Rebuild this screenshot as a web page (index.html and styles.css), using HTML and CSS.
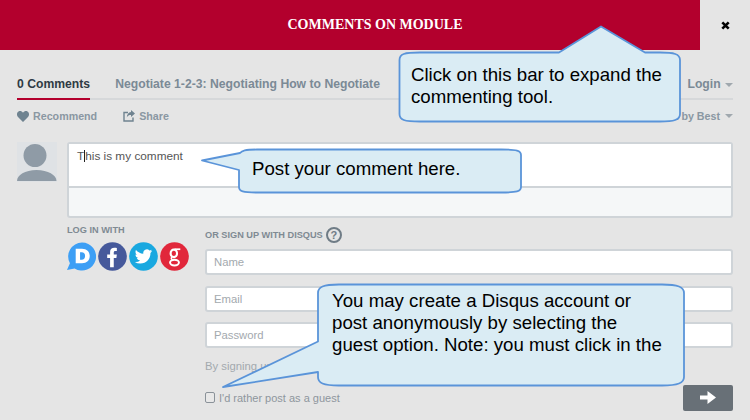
FILE: index.html
```html
<!DOCTYPE html>
<html lang="en">
<head>
<meta charset="utf-8">
<title>Comments on module</title>
<link rel="stylesheet" href="styles.css">
</head>
<body>
<div class="page">
  <header class="topbar">
    <div class="bar">COMMENTS ON MODULE</div>
    <div class="close">
      <svg width="9" height="9" viewBox="0 0 9 9"><path d="M1.300 1.300l6.400 6.400M7.700 1.300l-6.400 6.400" stroke="#000" stroke-width="2.600"/></svg>
    </div>
  </header>

  <main class="thread">
    <nav class="tabs">
      <span class="tab active">0 Comments</span>
      <span class="tab">Negotiate 1-2-3: Negotiating How to Negotiate</span>
      <span class="tab login">Login <i class="caret"></i></span>
    </nav>

    <div class="actions">
      <span class="action">
        <svg width="12" height="11" viewBox="0 0 12 11"><path d="M6 11L1 6C-.6 4.200-.2 1.500 1.500.5 3 -.3 5 .2 6 1.800 7 .2 9-.3 10.500.5 12.200 1.500 12.600 4.200 11 6z" fill="#6f8390"/></svg>
        Recommend
      </span>
      <span class="action share">
        <svg width="12" height="12" viewBox="0 0 12 12"><path d="M5 2.500H1v8.500h9V7.500" fill="none" stroke="#6f8390" stroke-width="1.400"/><path d="M8 0l4 3.500L8 7V5C6 5 4.800 5.600 3.800 7.500 3.800 4.500 5.500 2.300 8 2z" fill="#6f8390"/></svg>
        Share
      </span>
      <span class="action sort">Sort by Best <i class="caret"></i></span>
    </div>

    <section class="compose">
      <div class="avatar">
        <svg width="40" height="40" viewBox="0 0 40 40"><circle cx="18" cy="13.500" r="11.500" fill="#8f9ba6"/><path d="M0 39c0-6 8-11 19.500-11S39.500 33 39.500 39z" fill="#8f9ba6"/></svg>
      </div>
      <div class="box">
        <div class="textarea">T<span class="cursor"></span>his is my comment</div>
        <div class="toolbar"></div>
      </div>
    </section>

    <section class="auth">
      <div class="login-col">
        <div class="label">LOG IN WITH</div>
        <div class="socials">
          <svg class="social" width="29" height="29" viewBox="0 0 30 30"><path d="M15.500 .5a14.500 14.500 0 1 1-7.600 26.800L0 29l3-7A14.500 14.500 0 0 1 15.500 .5z" fill="#3d9ff5"/><path fill-rule="evenodd" d="M9 7h6.500c5 0 8 3 8 7.500s-3 7.500-8 7.500H9zm4.500 3.700v7.600h1.700c2.200 0 3.500-1.400 3.500-3.800s-1.300-3.800-3.500-3.800z" fill="#fff"/></svg>
          <svg class="social" width="29" height="29" viewBox="0 0 30 30"><circle cx="15" cy="15" r="14.800" fill="#46599b"/><path d="M12.500 26V16.500H9.500V13h3v-2.700C12.500 7.300 14.200 6 17 6c1 0 2 .1 2.500.2v3.200H18c-1.300 0-1.700.6-1.700 1.600V13h3.200l-.5 3.500h-2.700V26z" fill="#fff"/></svg>
          <svg class="social" width="29" height="29" viewBox="0 0 30 30"><circle cx="15" cy="15" r="14.800" fill="#19a8e0"/><g transform="translate(6 6) scale(.75)"><path d="M23.950 4.570a10 10 0 0 1-2.820.77 4.960 4.960 0 0 0 2.160-2.720c-.95.550-2 .96-3.130 1.190a4.920 4.920 0 0 0-8.380 4.480C7.690 8.100 4.070 6.130 1.640 3.160a4.820 4.820 0 0 0-.66 2.470c0 1.710.87 3.210 2.190 4.100a4.900 4.900 0 0 1-2.230-.61v.06a4.920 4.920 0 0 0 3.950 4.830 5 5 0 0 1-2.210.08 4.940 4.940 0 0 0 4.600 3.420A9.870 9.870 0 0 1 0 19.540a14 14 0 0 0 7.560 2.210c9.050 0 14-7.500 14-13.980 0-.21 0-.42-.02-.63a9.940 9.940 0 0 0 2.410-2.570z" fill="#fff"/></g></svg>
          <svg class="social" width="29" height="29" viewBox="0 0 30 30"><circle cx="15" cy="15" r="14.800" fill="#e1273b"/><g fill="none" stroke="#fff"><ellipse cx="14.300" cy="11.800" rx="3.300" ry="3.900" stroke-width="2.200"/><ellipse cx="15" cy="21.300" rx="4.600" ry="3" stroke-width="2"/><path d="M12.500 15.500c-1.500 1-1 2.300.5 2.800" stroke-width="1.500"/><path d="M15 7.500h6" stroke-width="1.800"/></g></svg>
        </div>
      </div>
      <div class="signup-col">
        <div class="label signup-label">OR SIGN UP WITH DISQUS <span class="help">?</span></div>
        <div class="field">Name</div>
        <div class="field">Email</div>
        <div class="field">Password</div>
        <p class="terms">By signing up, you agree to the Disqus Basic Rules</p>
        <div class="guest-row">
          <label class="guest"><span class="check"></span>I'd rather post as a guest</label>
          <span class="next">
            <svg width="16" height="13" viewBox="0 0 16 13"><path d="M0 4.500h7.500V0L16 6.500 7.500 13V8.500H0z" fill="#fff"/></svg>
          </span>
        </div>
      </div>
    </section>
  </main>

  <aside class="callout callout-bar">
    <svg class="shape" width="286" height="100" viewBox="0 0 286 100"><path d="M22 27.500H161L203 1.500 247 27.500H262C276 27.500 282 29 282 35V89C282 95 276 96.500 262 96.500H22C6 96.500 1.500 95 1.500 89V35C1.500 29 6 27.500 22 27.500z"/></svg>
    <p class="callout-text">Click on this bar to expand the commenting tool.</p>
  </aside>

  <aside class="callout callout-post">
    <svg class="shape" width="324" height="48" viewBox="0 0 324 48"><path d="M56 1.500H300C316 1.500 320 2.500 320 7V39C320 43.500 316 44.500 300 44.500H56C42 44.500 38 43.500 38 39V22L1 12.500 39 5C41 2.500 44 1.500 56 1.500z"/></svg>
    <p class="callout-text">Post your comment here.</p>
  </aside>

  <aside class="callout callout-guest">
    <svg class="shape" width="464" height="108" viewBox="0 0 464 108"><path d="M117 1.500H440C456 1.500 462 4 462 10V94C462 100 456 102.500 440 102.500H117C101 102.500 96 100 96 94V89L1 104 96 58.500V10C96 4 101 1.500 117 1.500z"/></svg>
    <p class="callout-text">You may create a Disqus account or post anonymously by selecting the guest option. Note: you must click in the</p>
  </aside>
</div>
</body>
</html>
```

FILE: styles.css
```css
* { box-sizing: border-box; }
html, body { margin: 0; padding: 0; }
body { font-family: "Liberation Sans", Arial, sans-serif; }

.page {
  position: relative;
  width: 750px;
  height: 420px;
  overflow: hidden;
  background: #e5e5e5;
}

.topbar { display: flex; height: 50px; }
.bar {
  width: 700px;
  display: flex;
  align-items: center;
  justify-content: center;
  padding-left: 50px;
  background: #b3002d;
  color: #fff;
  font-family: "Liberation Serif", serif;
  font-weight: 700;
  font-size: 14px;
}
.close { flex: 1; display: flex; align-items: center; justify-content: center; }

.thread { padding: 0 17px; }

.tabs {
  display: flex;
  gap: 25px;
  height: 50px;
  border-bottom: 2px solid #d6d8da;
}
.tab {
  height: 50px;
  padding-top: 26px;
  font-size: 12.200px;
  font-weight: 700;
  line-height: 16px;
  color: #7b8a96;
}
.tab.active { color: #2e3a44; border-bottom: 2px solid #b3002d; }
.tab.login { margin-left: auto; }

.caret {
  display: inline-block;
  width: 0;
  height: 0;
  margin-left: 1px;
  vertical-align: middle;
  border-left: 4px solid transparent;
  border-right: 4px solid transparent;
  border-top: 4px solid #a0a8ae;
}

.actions {
  display: flex;
  align-items: center;
  gap: 26px;
  height: 32px;
  margin-bottom: 10px;
  font-size: 10.700px;
  font-weight: 700;
  color: #8a97a2;
}
.action { display: flex; align-items: center; gap: 4px; }
.sort { margin-left: auto; }

.compose { display: flex; gap: 10px; }
.avatar { width: 40px; height: 40px; background: #dfe2e5; }
.box {
  flex: 1;
  height: 76px;
  border: 2px solid #cfd4d8;
  border-radius: 3px;
  background: #f5f7f8;
}
.textarea {
  height: 44px;
  padding: 5px 8px;
  background: #fff;
  border-bottom: 2px solid #cfd4d8;
  font-size: 11.800px;
  line-height: 14px;
  color: #555;
}
.cursor {
  display: inline-block;
  width: 0;
  height: 12px;
  vertical-align: -2px;
  border-left: 1px solid #222;
}

.auth { display: flex; margin-left: 50px; }
.login-col { width: 138px; padding-top: 6px; }
.signup-col { flex: 1; padding-top: 9px; }

.label {
  font-size: 9.200px;
  font-weight: 700;
  line-height: 12px;
  color: #7f8a93;
}
.socials { display: flex; gap: 2px; margin-top: 6px; }
.social { display: block; }

.signup-label { display: flex; align-items: center; gap: 3px; height: 16px; margin-bottom: 6px; }
.help {
  display: flex;
  align-items: center;
  justify-content: center;
  width: 16px;
  height: 16px;
  border: 2px solid #6f7c86;
  border-radius: 50%;
  font-size: 11px;
  color: #6f7c86;
}

.field {
  height: 26px;
  margin-bottom: 10.500px;
  padding: 0 7px;
  background: #fff;
  border: 2px solid #cfd4d8;
  border-radius: 3px;
  font-size: 11.300px;
  line-height: 22px;
  color: #a3a9ae;
}

.terms {
  margin: 8px 0 0;
  font-size: 11.300px;
  line-height: 14px;
  color: #a3a9ae;
}

.guest-row {
  display: flex;
  justify-content: space-between;
  align-items: flex-start;
  margin-top: 12px;
}
.guest {
  display: flex;
  align-items: center;
  gap: 4px;
  margin-top: 6px;
  font-size: 11px;
  line-height: 14px;
  color: #8e969d;
}
.check {
  width: 10px;
  height: 11px;
  background: #e8e8e8;
  border: 1px solid #8a9299;
  border-radius: 2px;
}
.next {
  display: flex;
  align-items: center;
  justify-content: center;
  width: 50px;
  height: 26px;
  background: #687077;
  border-radius: 2px;
}

.callout { position: absolute; }
.shape { position: absolute; left: 0; top: 0; overflow: visible; }
.shape path { fill: #daecf4; stroke: #5a94d9; stroke-width: 1.800; stroke-linejoin: round; }
.callout-text {
  position: relative;
  margin: 0;
  font-size: 18.670px;
  line-height: 22px;
  color: #000;
}
.callout-bar { left: 398px; top: 25px; width: 286px; height: 100px; }
.callout-bar .callout-text { padding: 39px 10px 0 13px; }
.callout-post { left: 201px; top: 148px; width: 324px; height: 48px; }
.callout-post .callout-text { padding: 10px 0 0 51px; }
.callout-guest { left: 222px; top: 283px; width: 464px; height: 108px; }
.callout-guest .callout-text { padding: 7px 19px 0 110px; }
```
